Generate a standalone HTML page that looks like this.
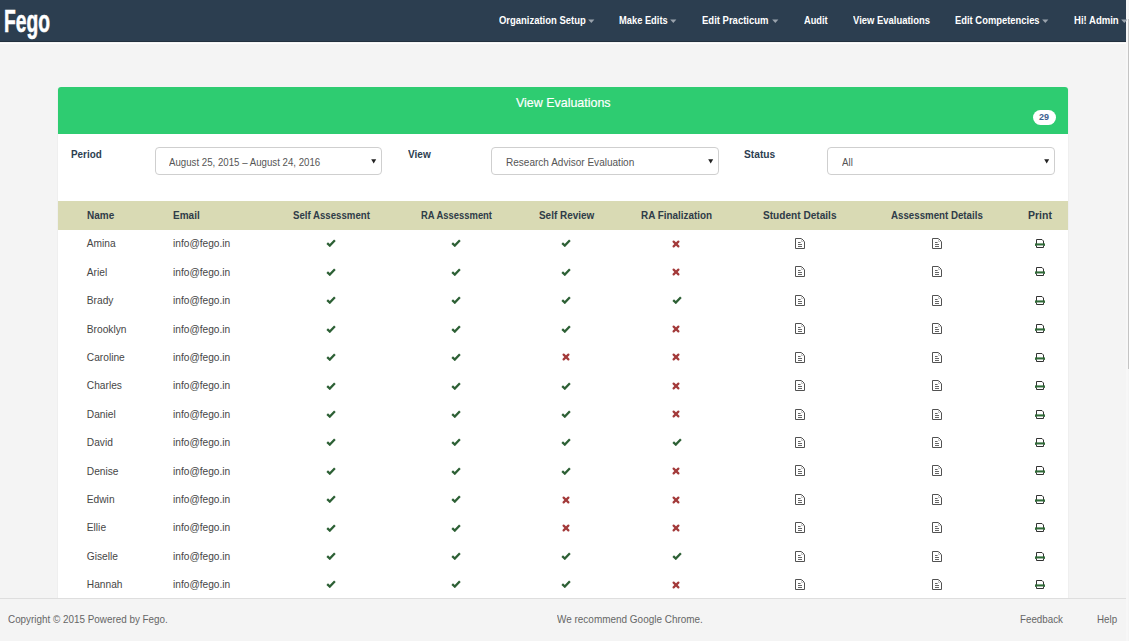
<!DOCTYPE html>
<html><head><meta charset="utf-8"><title>View Evaluations - Fego</title>
<style>
html,body{margin:0;padding:0;}
body{width:1129px;height:641px;overflow:hidden;position:relative;background:#f4f4f4;font-family:"Liberation Sans", sans-serif;}
.t{position:absolute;white-space:nowrap;font-family:"Liberation Sans", sans-serif;transform-origin:0 0;}
#t7{-webkit-text-stroke:0.6px #fff;}
#t8{-webkit-text-stroke:0.2px #fff;}
.ic{position:absolute;display:block;}
.navbar{position:absolute;left:0;top:0;width:1126px;height:42px;background:#2c3e50;border-bottom:0;}
.navline{position:absolute;left:0;top:41px;width:1126px;height:1px;background:#22303e;}
.navglow{position:absolute;left:0;top:43px;width:1126px;height:1px;background:#fdfdfd;}
.panel{position:absolute;left:58px;top:87px;width:1010px;height:520px;background:#fff;border-radius:3px 3px 0 0;box-shadow:-1px 0 0 #efefef,1px 0 0 #efefef;}
.phead{position:absolute;left:58px;top:87px;width:1010px;height:47px;background:#2ecc71;border-radius:3px 3px 0 0;}
.badge{position:absolute;left:1033px;top:110px;width:23px;height:15px;border-radius:8px;background:#fff;}
.sel{position:absolute;top:147px;height:26.3px;width:226px;border:1px solid #cfcfcf;border-radius:4px;background:#fff;box-sizing:content-box;}
.thead{position:absolute;left:58px;top:201px;width:1010px;height:29px;background:#d9dab4;}
.footer{position:absolute;left:0;top:598px;width:1126px;height:43px;background:#f4f4f4;border-top:1px solid #dedede;box-sizing:border-box;}
.sbar1{position:absolute;left:1126px;top:0;width:2px;height:641px;background:#f7f7f7;}
.sbar2{position:absolute;left:1128px;top:19px;width:1px;height:350px;background:#c4c4c4;}
</style></head><body>
<div class="navbar"></div><div class="navline"></div><div class="navglow"></div>
<div class="panel"></div>
<div class="phead"></div>
<div class="badge"></div>
<div class="sel" style="left:155px;width:225px"></div>
<div class="sel" style="left:491px"></div>
<div class="sel" style="left:827px"></div>
<div class="thead"></div>
<svg class="ic" style="left:325.70px;top:239.40px" width="10" height="8" viewBox="0 0 10 8"><path d="M1.2 4.2 L3.8 6.6 L8.9 1.3" fill="none" stroke="#2d6035" stroke-width="2.3" stroke-linecap="butt" stroke-linejoin="miter"/></svg><svg class="ic" style="left:451.40px;top:239.40px" width="10" height="8" viewBox="0 0 10 8"><path d="M1.2 4.2 L3.8 6.6 L8.9 1.3" fill="none" stroke="#2d6035" stroke-width="2.3" stroke-linecap="butt" stroke-linejoin="miter"/></svg><svg class="ic" style="left:561.40px;top:239.40px" width="10" height="8" viewBox="0 0 10 8"><path d="M1.2 4.2 L3.8 6.6 L8.9 1.3" fill="none" stroke="#2d6035" stroke-width="2.3" stroke-linecap="butt" stroke-linejoin="miter"/></svg><svg class="ic" style="left:672.00px;top:239.80px" width="8" height="8" viewBox="0 0 8 8"><path d="M1.6 1.6 L6.4 6.4 M6.4 1.6 L1.6 6.4" fill="none" stroke="#a33a3a" stroke-width="2.2" stroke-linecap="round"/></svg><svg class="ic" style="left:795px;top:238px" width="10" height="11" viewBox="0 0 10 11"><path d="M0.5 0.5 H6.5 L9.5 3.5 V10.5 H0.5 Z" fill="#fff" stroke="#525252" stroke-width="1"/><path d="M3 4.5 H5.6 M3 6.5 H7 M3 8.5 H7" stroke="#666" stroke-width="1"/><path d="M6.5 0.5 V3.5 H9.5" fill="none" stroke="#b0b0b0" stroke-width="0.7"/></svg><svg class="ic" style="left:932px;top:238px" width="10" height="11" viewBox="0 0 10 11"><path d="M0.5 0.5 H6.5 L9.5 3.5 V10.5 H0.5 Z" fill="#fff" stroke="#525252" stroke-width="1"/><path d="M3 4.5 H5.6 M3 6.5 H7 M3 8.5 H7" stroke="#666" stroke-width="1"/><path d="M6.5 0.5 V3.5 H9.5" fill="none" stroke="#b0b0b0" stroke-width="0.7"/></svg><svg class="ic" style="left:1035px;top:239px" width="10" height="9" viewBox="0 0 10 9"><path d="M1.5 5 V0.5 H7 L8.5 2 V5" fill="#fff" stroke="#333" stroke-width="1"/><rect x="0" y="4.4" width="10" height="2.5" fill="#2f6b37"/><path d="M1.5 6.5 V8.5 H8.5 V6.5" fill="#fff" stroke="#333" stroke-width="1"/></svg><svg class="ic" style="left:325.70px;top:267.82px" width="10" height="8" viewBox="0 0 10 8"><path d="M1.2 4.2 L3.8 6.6 L8.9 1.3" fill="none" stroke="#2d6035" stroke-width="2.3" stroke-linecap="butt" stroke-linejoin="miter"/></svg><svg class="ic" style="left:451.40px;top:267.82px" width="10" height="8" viewBox="0 0 10 8"><path d="M1.2 4.2 L3.8 6.6 L8.9 1.3" fill="none" stroke="#2d6035" stroke-width="2.3" stroke-linecap="butt" stroke-linejoin="miter"/></svg><svg class="ic" style="left:561.40px;top:267.82px" width="10" height="8" viewBox="0 0 10 8"><path d="M1.2 4.2 L3.8 6.6 L8.9 1.3" fill="none" stroke="#2d6035" stroke-width="2.3" stroke-linecap="butt" stroke-linejoin="miter"/></svg><svg class="ic" style="left:672.00px;top:268.22px" width="8" height="8" viewBox="0 0 8 8"><path d="M1.6 1.6 L6.4 6.4 M6.4 1.6 L1.6 6.4" fill="none" stroke="#a33a3a" stroke-width="2.2" stroke-linecap="round"/></svg><svg class="ic" style="left:795px;top:266px" width="10" height="11" viewBox="0 0 10 11"><path d="M0.5 0.5 H6.5 L9.5 3.5 V10.5 H0.5 Z" fill="#fff" stroke="#525252" stroke-width="1"/><path d="M3 4.5 H5.6 M3 6.5 H7 M3 8.5 H7" stroke="#666" stroke-width="1"/><path d="M6.5 0.5 V3.5 H9.5" fill="none" stroke="#b0b0b0" stroke-width="0.7"/></svg><svg class="ic" style="left:932px;top:266px" width="10" height="11" viewBox="0 0 10 11"><path d="M0.5 0.5 H6.5 L9.5 3.5 V10.5 H0.5 Z" fill="#fff" stroke="#525252" stroke-width="1"/><path d="M3 4.5 H5.6 M3 6.5 H7 M3 8.5 H7" stroke="#666" stroke-width="1"/><path d="M6.5 0.5 V3.5 H9.5" fill="none" stroke="#b0b0b0" stroke-width="0.7"/></svg><svg class="ic" style="left:1035px;top:267px" width="10" height="9" viewBox="0 0 10 9"><path d="M1.5 5 V0.5 H7 L8.5 2 V5" fill="#fff" stroke="#333" stroke-width="1"/><rect x="0" y="4.4" width="10" height="2.5" fill="#2f6b37"/><path d="M1.5 6.5 V8.5 H8.5 V6.5" fill="#fff" stroke="#333" stroke-width="1"/></svg><svg class="ic" style="left:325.70px;top:296.24px" width="10" height="8" viewBox="0 0 10 8"><path d="M1.2 4.2 L3.8 6.6 L8.9 1.3" fill="none" stroke="#2d6035" stroke-width="2.3" stroke-linecap="butt" stroke-linejoin="miter"/></svg><svg class="ic" style="left:451.40px;top:296.24px" width="10" height="8" viewBox="0 0 10 8"><path d="M1.2 4.2 L3.8 6.6 L8.9 1.3" fill="none" stroke="#2d6035" stroke-width="2.3" stroke-linecap="butt" stroke-linejoin="miter"/></svg><svg class="ic" style="left:561.40px;top:296.24px" width="10" height="8" viewBox="0 0 10 8"><path d="M1.2 4.2 L3.8 6.6 L8.9 1.3" fill="none" stroke="#2d6035" stroke-width="2.3" stroke-linecap="butt" stroke-linejoin="miter"/></svg><svg class="ic" style="left:671.50px;top:296.24px" width="10" height="8" viewBox="0 0 10 8"><path d="M1.2 4.2 L3.8 6.6 L8.9 1.3" fill="none" stroke="#2d6035" stroke-width="2.3" stroke-linecap="butt" stroke-linejoin="miter"/></svg><svg class="ic" style="left:795px;top:295px" width="10" height="11" viewBox="0 0 10 11"><path d="M0.5 0.5 H6.5 L9.5 3.5 V10.5 H0.5 Z" fill="#fff" stroke="#525252" stroke-width="1"/><path d="M3 4.5 H5.6 M3 6.5 H7 M3 8.5 H7" stroke="#666" stroke-width="1"/><path d="M6.5 0.5 V3.5 H9.5" fill="none" stroke="#b0b0b0" stroke-width="0.7"/></svg><svg class="ic" style="left:932px;top:295px" width="10" height="11" viewBox="0 0 10 11"><path d="M0.5 0.5 H6.5 L9.5 3.5 V10.5 H0.5 Z" fill="#fff" stroke="#525252" stroke-width="1"/><path d="M3 4.5 H5.6 M3 6.5 H7 M3 8.5 H7" stroke="#666" stroke-width="1"/><path d="M6.5 0.5 V3.5 H9.5" fill="none" stroke="#b0b0b0" stroke-width="0.7"/></svg><svg class="ic" style="left:1035px;top:296px" width="10" height="9" viewBox="0 0 10 9"><path d="M1.5 5 V0.5 H7 L8.5 2 V5" fill="#fff" stroke="#333" stroke-width="1"/><rect x="0" y="4.4" width="10" height="2.5" fill="#2f6b37"/><path d="M1.5 6.5 V8.5 H8.5 V6.5" fill="#fff" stroke="#333" stroke-width="1"/></svg><svg class="ic" style="left:325.70px;top:324.66px" width="10" height="8" viewBox="0 0 10 8"><path d="M1.2 4.2 L3.8 6.6 L8.9 1.3" fill="none" stroke="#2d6035" stroke-width="2.3" stroke-linecap="butt" stroke-linejoin="miter"/></svg><svg class="ic" style="left:451.40px;top:324.66px" width="10" height="8" viewBox="0 0 10 8"><path d="M1.2 4.2 L3.8 6.6 L8.9 1.3" fill="none" stroke="#2d6035" stroke-width="2.3" stroke-linecap="butt" stroke-linejoin="miter"/></svg><svg class="ic" style="left:561.40px;top:324.66px" width="10" height="8" viewBox="0 0 10 8"><path d="M1.2 4.2 L3.8 6.6 L8.9 1.3" fill="none" stroke="#2d6035" stroke-width="2.3" stroke-linecap="butt" stroke-linejoin="miter"/></svg><svg class="ic" style="left:672.00px;top:325.06px" width="8" height="8" viewBox="0 0 8 8"><path d="M1.6 1.6 L6.4 6.4 M6.4 1.6 L1.6 6.4" fill="none" stroke="#a33a3a" stroke-width="2.2" stroke-linecap="round"/></svg><svg class="ic" style="left:795px;top:323px" width="10" height="11" viewBox="0 0 10 11"><path d="M0.5 0.5 H6.5 L9.5 3.5 V10.5 H0.5 Z" fill="#fff" stroke="#525252" stroke-width="1"/><path d="M3 4.5 H5.6 M3 6.5 H7 M3 8.5 H7" stroke="#666" stroke-width="1"/><path d="M6.5 0.5 V3.5 H9.5" fill="none" stroke="#b0b0b0" stroke-width="0.7"/></svg><svg class="ic" style="left:932px;top:323px" width="10" height="11" viewBox="0 0 10 11"><path d="M0.5 0.5 H6.5 L9.5 3.5 V10.5 H0.5 Z" fill="#fff" stroke="#525252" stroke-width="1"/><path d="M3 4.5 H5.6 M3 6.5 H7 M3 8.5 H7" stroke="#666" stroke-width="1"/><path d="M6.5 0.5 V3.5 H9.5" fill="none" stroke="#b0b0b0" stroke-width="0.7"/></svg><svg class="ic" style="left:1035px;top:324px" width="10" height="9" viewBox="0 0 10 9"><path d="M1.5 5 V0.5 H7 L8.5 2 V5" fill="#fff" stroke="#333" stroke-width="1"/><rect x="0" y="4.4" width="10" height="2.5" fill="#2f6b37"/><path d="M1.5 6.5 V8.5 H8.5 V6.5" fill="#fff" stroke="#333" stroke-width="1"/></svg><svg class="ic" style="left:325.70px;top:353.08px" width="10" height="8" viewBox="0 0 10 8"><path d="M1.2 4.2 L3.8 6.6 L8.9 1.3" fill="none" stroke="#2d6035" stroke-width="2.3" stroke-linecap="butt" stroke-linejoin="miter"/></svg><svg class="ic" style="left:451.40px;top:353.08px" width="10" height="8" viewBox="0 0 10 8"><path d="M1.2 4.2 L3.8 6.6 L8.9 1.3" fill="none" stroke="#2d6035" stroke-width="2.3" stroke-linecap="butt" stroke-linejoin="miter"/></svg><svg class="ic" style="left:561.90px;top:353.48px" width="8" height="8" viewBox="0 0 8 8"><path d="M1.6 1.6 L6.4 6.4 M6.4 1.6 L1.6 6.4" fill="none" stroke="#a33a3a" stroke-width="2.2" stroke-linecap="round"/></svg><svg class="ic" style="left:672.00px;top:353.48px" width="8" height="8" viewBox="0 0 8 8"><path d="M1.6 1.6 L6.4 6.4 M6.4 1.6 L1.6 6.4" fill="none" stroke="#a33a3a" stroke-width="2.2" stroke-linecap="round"/></svg><svg class="ic" style="left:795px;top:352px" width="10" height="11" viewBox="0 0 10 11"><path d="M0.5 0.5 H6.5 L9.5 3.5 V10.5 H0.5 Z" fill="#fff" stroke="#525252" stroke-width="1"/><path d="M3 4.5 H5.6 M3 6.5 H7 M3 8.5 H7" stroke="#666" stroke-width="1"/><path d="M6.5 0.5 V3.5 H9.5" fill="none" stroke="#b0b0b0" stroke-width="0.7"/></svg><svg class="ic" style="left:932px;top:352px" width="10" height="11" viewBox="0 0 10 11"><path d="M0.5 0.5 H6.5 L9.5 3.5 V10.5 H0.5 Z" fill="#fff" stroke="#525252" stroke-width="1"/><path d="M3 4.5 H5.6 M3 6.5 H7 M3 8.5 H7" stroke="#666" stroke-width="1"/><path d="M6.5 0.5 V3.5 H9.5" fill="none" stroke="#b0b0b0" stroke-width="0.7"/></svg><svg class="ic" style="left:1035px;top:353px" width="10" height="9" viewBox="0 0 10 9"><path d="M1.5 5 V0.5 H7 L8.5 2 V5" fill="#fff" stroke="#333" stroke-width="1"/><rect x="0" y="4.4" width="10" height="2.5" fill="#2f6b37"/><path d="M1.5 6.5 V8.5 H8.5 V6.5" fill="#fff" stroke="#333" stroke-width="1"/></svg><svg class="ic" style="left:325.70px;top:381.50px" width="10" height="8" viewBox="0 0 10 8"><path d="M1.2 4.2 L3.8 6.6 L8.9 1.3" fill="none" stroke="#2d6035" stroke-width="2.3" stroke-linecap="butt" stroke-linejoin="miter"/></svg><svg class="ic" style="left:451.40px;top:381.50px" width="10" height="8" viewBox="0 0 10 8"><path d="M1.2 4.2 L3.8 6.6 L8.9 1.3" fill="none" stroke="#2d6035" stroke-width="2.3" stroke-linecap="butt" stroke-linejoin="miter"/></svg><svg class="ic" style="left:561.40px;top:381.50px" width="10" height="8" viewBox="0 0 10 8"><path d="M1.2 4.2 L3.8 6.6 L8.9 1.3" fill="none" stroke="#2d6035" stroke-width="2.3" stroke-linecap="butt" stroke-linejoin="miter"/></svg><svg class="ic" style="left:672.00px;top:381.90px" width="8" height="8" viewBox="0 0 8 8"><path d="M1.6 1.6 L6.4 6.4 M6.4 1.6 L1.6 6.4" fill="none" stroke="#a33a3a" stroke-width="2.2" stroke-linecap="round"/></svg><svg class="ic" style="left:795px;top:380px" width="10" height="11" viewBox="0 0 10 11"><path d="M0.5 0.5 H6.5 L9.5 3.5 V10.5 H0.5 Z" fill="#fff" stroke="#525252" stroke-width="1"/><path d="M3 4.5 H5.6 M3 6.5 H7 M3 8.5 H7" stroke="#666" stroke-width="1"/><path d="M6.5 0.5 V3.5 H9.5" fill="none" stroke="#b0b0b0" stroke-width="0.7"/></svg><svg class="ic" style="left:932px;top:380px" width="10" height="11" viewBox="0 0 10 11"><path d="M0.5 0.5 H6.5 L9.5 3.5 V10.5 H0.5 Z" fill="#fff" stroke="#525252" stroke-width="1"/><path d="M3 4.5 H5.6 M3 6.5 H7 M3 8.5 H7" stroke="#666" stroke-width="1"/><path d="M6.5 0.5 V3.5 H9.5" fill="none" stroke="#b0b0b0" stroke-width="0.7"/></svg><svg class="ic" style="left:1035px;top:381px" width="10" height="9" viewBox="0 0 10 9"><path d="M1.5 5 V0.5 H7 L8.5 2 V5" fill="#fff" stroke="#333" stroke-width="1"/><rect x="0" y="4.4" width="10" height="2.5" fill="#2f6b37"/><path d="M1.5 6.5 V8.5 H8.5 V6.5" fill="#fff" stroke="#333" stroke-width="1"/></svg><svg class="ic" style="left:325.70px;top:409.92px" width="10" height="8" viewBox="0 0 10 8"><path d="M1.2 4.2 L3.8 6.6 L8.9 1.3" fill="none" stroke="#2d6035" stroke-width="2.3" stroke-linecap="butt" stroke-linejoin="miter"/></svg><svg class="ic" style="left:451.40px;top:409.92px" width="10" height="8" viewBox="0 0 10 8"><path d="M1.2 4.2 L3.8 6.6 L8.9 1.3" fill="none" stroke="#2d6035" stroke-width="2.3" stroke-linecap="butt" stroke-linejoin="miter"/></svg><svg class="ic" style="left:561.40px;top:409.92px" width="10" height="8" viewBox="0 0 10 8"><path d="M1.2 4.2 L3.8 6.6 L8.9 1.3" fill="none" stroke="#2d6035" stroke-width="2.3" stroke-linecap="butt" stroke-linejoin="miter"/></svg><svg class="ic" style="left:672.00px;top:410.32px" width="8" height="8" viewBox="0 0 8 8"><path d="M1.6 1.6 L6.4 6.4 M6.4 1.6 L1.6 6.4" fill="none" stroke="#a33a3a" stroke-width="2.2" stroke-linecap="round"/></svg><svg class="ic" style="left:795px;top:409px" width="10" height="11" viewBox="0 0 10 11"><path d="M0.5 0.5 H6.5 L9.5 3.5 V10.5 H0.5 Z" fill="#fff" stroke="#525252" stroke-width="1"/><path d="M3 4.5 H5.6 M3 6.5 H7 M3 8.5 H7" stroke="#666" stroke-width="1"/><path d="M6.5 0.5 V3.5 H9.5" fill="none" stroke="#b0b0b0" stroke-width="0.7"/></svg><svg class="ic" style="left:932px;top:409px" width="10" height="11" viewBox="0 0 10 11"><path d="M0.5 0.5 H6.5 L9.5 3.5 V10.5 H0.5 Z" fill="#fff" stroke="#525252" stroke-width="1"/><path d="M3 4.5 H5.6 M3 6.5 H7 M3 8.5 H7" stroke="#666" stroke-width="1"/><path d="M6.5 0.5 V3.5 H9.5" fill="none" stroke="#b0b0b0" stroke-width="0.7"/></svg><svg class="ic" style="left:1035px;top:410px" width="10" height="9" viewBox="0 0 10 9"><path d="M1.5 5 V0.5 H7 L8.5 2 V5" fill="#fff" stroke="#333" stroke-width="1"/><rect x="0" y="4.4" width="10" height="2.5" fill="#2f6b37"/><path d="M1.5 6.5 V8.5 H8.5 V6.5" fill="#fff" stroke="#333" stroke-width="1"/></svg><svg class="ic" style="left:325.70px;top:438.34px" width="10" height="8" viewBox="0 0 10 8"><path d="M1.2 4.2 L3.8 6.6 L8.9 1.3" fill="none" stroke="#2d6035" stroke-width="2.3" stroke-linecap="butt" stroke-linejoin="miter"/></svg><svg class="ic" style="left:451.40px;top:438.34px" width="10" height="8" viewBox="0 0 10 8"><path d="M1.2 4.2 L3.8 6.6 L8.9 1.3" fill="none" stroke="#2d6035" stroke-width="2.3" stroke-linecap="butt" stroke-linejoin="miter"/></svg><svg class="ic" style="left:561.40px;top:438.34px" width="10" height="8" viewBox="0 0 10 8"><path d="M1.2 4.2 L3.8 6.6 L8.9 1.3" fill="none" stroke="#2d6035" stroke-width="2.3" stroke-linecap="butt" stroke-linejoin="miter"/></svg><svg class="ic" style="left:671.50px;top:438.34px" width="10" height="8" viewBox="0 0 10 8"><path d="M1.2 4.2 L3.8 6.6 L8.9 1.3" fill="none" stroke="#2d6035" stroke-width="2.3" stroke-linecap="butt" stroke-linejoin="miter"/></svg><svg class="ic" style="left:795px;top:437px" width="10" height="11" viewBox="0 0 10 11"><path d="M0.5 0.5 H6.5 L9.5 3.5 V10.5 H0.5 Z" fill="#fff" stroke="#525252" stroke-width="1"/><path d="M3 4.5 H5.6 M3 6.5 H7 M3 8.5 H7" stroke="#666" stroke-width="1"/><path d="M6.5 0.5 V3.5 H9.5" fill="none" stroke="#b0b0b0" stroke-width="0.7"/></svg><svg class="ic" style="left:932px;top:437px" width="10" height="11" viewBox="0 0 10 11"><path d="M0.5 0.5 H6.5 L9.5 3.5 V10.5 H0.5 Z" fill="#fff" stroke="#525252" stroke-width="1"/><path d="M3 4.5 H5.6 M3 6.5 H7 M3 8.5 H7" stroke="#666" stroke-width="1"/><path d="M6.5 0.5 V3.5 H9.5" fill="none" stroke="#b0b0b0" stroke-width="0.7"/></svg><svg class="ic" style="left:1035px;top:438px" width="10" height="9" viewBox="0 0 10 9"><path d="M1.5 5 V0.5 H7 L8.5 2 V5" fill="#fff" stroke="#333" stroke-width="1"/><rect x="0" y="4.4" width="10" height="2.5" fill="#2f6b37"/><path d="M1.5 6.5 V8.5 H8.5 V6.5" fill="#fff" stroke="#333" stroke-width="1"/></svg><svg class="ic" style="left:325.70px;top:466.76px" width="10" height="8" viewBox="0 0 10 8"><path d="M1.2 4.2 L3.8 6.6 L8.9 1.3" fill="none" stroke="#2d6035" stroke-width="2.3" stroke-linecap="butt" stroke-linejoin="miter"/></svg><svg class="ic" style="left:451.40px;top:466.76px" width="10" height="8" viewBox="0 0 10 8"><path d="M1.2 4.2 L3.8 6.6 L8.9 1.3" fill="none" stroke="#2d6035" stroke-width="2.3" stroke-linecap="butt" stroke-linejoin="miter"/></svg><svg class="ic" style="left:561.40px;top:466.76px" width="10" height="8" viewBox="0 0 10 8"><path d="M1.2 4.2 L3.8 6.6 L8.9 1.3" fill="none" stroke="#2d6035" stroke-width="2.3" stroke-linecap="butt" stroke-linejoin="miter"/></svg><svg class="ic" style="left:672.00px;top:467.16px" width="8" height="8" viewBox="0 0 8 8"><path d="M1.6 1.6 L6.4 6.4 M6.4 1.6 L1.6 6.4" fill="none" stroke="#a33a3a" stroke-width="2.2" stroke-linecap="round"/></svg><svg class="ic" style="left:795px;top:465px" width="10" height="11" viewBox="0 0 10 11"><path d="M0.5 0.5 H6.5 L9.5 3.5 V10.5 H0.5 Z" fill="#fff" stroke="#525252" stroke-width="1"/><path d="M3 4.5 H5.6 M3 6.5 H7 M3 8.5 H7" stroke="#666" stroke-width="1"/><path d="M6.5 0.5 V3.5 H9.5" fill="none" stroke="#b0b0b0" stroke-width="0.7"/></svg><svg class="ic" style="left:932px;top:465px" width="10" height="11" viewBox="0 0 10 11"><path d="M0.5 0.5 H6.5 L9.5 3.5 V10.5 H0.5 Z" fill="#fff" stroke="#525252" stroke-width="1"/><path d="M3 4.5 H5.6 M3 6.5 H7 M3 8.5 H7" stroke="#666" stroke-width="1"/><path d="M6.5 0.5 V3.5 H9.5" fill="none" stroke="#b0b0b0" stroke-width="0.7"/></svg><svg class="ic" style="left:1035px;top:466px" width="10" height="9" viewBox="0 0 10 9"><path d="M1.5 5 V0.5 H7 L8.5 2 V5" fill="#fff" stroke="#333" stroke-width="1"/><rect x="0" y="4.4" width="10" height="2.5" fill="#2f6b37"/><path d="M1.5 6.5 V8.5 H8.5 V6.5" fill="#fff" stroke="#333" stroke-width="1"/></svg><svg class="ic" style="left:325.70px;top:495.18px" width="10" height="8" viewBox="0 0 10 8"><path d="M1.2 4.2 L3.8 6.6 L8.9 1.3" fill="none" stroke="#2d6035" stroke-width="2.3" stroke-linecap="butt" stroke-linejoin="miter"/></svg><svg class="ic" style="left:451.40px;top:495.18px" width="10" height="8" viewBox="0 0 10 8"><path d="M1.2 4.2 L3.8 6.6 L8.9 1.3" fill="none" stroke="#2d6035" stroke-width="2.3" stroke-linecap="butt" stroke-linejoin="miter"/></svg><svg class="ic" style="left:561.90px;top:495.58px" width="8" height="8" viewBox="0 0 8 8"><path d="M1.6 1.6 L6.4 6.4 M6.4 1.6 L1.6 6.4" fill="none" stroke="#a33a3a" stroke-width="2.2" stroke-linecap="round"/></svg><svg class="ic" style="left:672.00px;top:495.58px" width="8" height="8" viewBox="0 0 8 8"><path d="M1.6 1.6 L6.4 6.4 M6.4 1.6 L1.6 6.4" fill="none" stroke="#a33a3a" stroke-width="2.2" stroke-linecap="round"/></svg><svg class="ic" style="left:795px;top:494px" width="10" height="11" viewBox="0 0 10 11"><path d="M0.5 0.5 H6.5 L9.5 3.5 V10.5 H0.5 Z" fill="#fff" stroke="#525252" stroke-width="1"/><path d="M3 4.5 H5.6 M3 6.5 H7 M3 8.5 H7" stroke="#666" stroke-width="1"/><path d="M6.5 0.5 V3.5 H9.5" fill="none" stroke="#b0b0b0" stroke-width="0.7"/></svg><svg class="ic" style="left:932px;top:494px" width="10" height="11" viewBox="0 0 10 11"><path d="M0.5 0.5 H6.5 L9.5 3.5 V10.5 H0.5 Z" fill="#fff" stroke="#525252" stroke-width="1"/><path d="M3 4.5 H5.6 M3 6.5 H7 M3 8.5 H7" stroke="#666" stroke-width="1"/><path d="M6.5 0.5 V3.5 H9.5" fill="none" stroke="#b0b0b0" stroke-width="0.7"/></svg><svg class="ic" style="left:1035px;top:495px" width="10" height="9" viewBox="0 0 10 9"><path d="M1.5 5 V0.5 H7 L8.5 2 V5" fill="#fff" stroke="#333" stroke-width="1"/><rect x="0" y="4.4" width="10" height="2.5" fill="#2f6b37"/><path d="M1.5 6.5 V8.5 H8.5 V6.5" fill="#fff" stroke="#333" stroke-width="1"/></svg><svg class="ic" style="left:325.70px;top:523.60px" width="10" height="8" viewBox="0 0 10 8"><path d="M1.2 4.2 L3.8 6.6 L8.9 1.3" fill="none" stroke="#2d6035" stroke-width="2.3" stroke-linecap="butt" stroke-linejoin="miter"/></svg><svg class="ic" style="left:451.40px;top:523.60px" width="10" height="8" viewBox="0 0 10 8"><path d="M1.2 4.2 L3.8 6.6 L8.9 1.3" fill="none" stroke="#2d6035" stroke-width="2.3" stroke-linecap="butt" stroke-linejoin="miter"/></svg><svg class="ic" style="left:561.90px;top:524.00px" width="8" height="8" viewBox="0 0 8 8"><path d="M1.6 1.6 L6.4 6.4 M6.4 1.6 L1.6 6.4" fill="none" stroke="#a33a3a" stroke-width="2.2" stroke-linecap="round"/></svg><svg class="ic" style="left:672.00px;top:524.00px" width="8" height="8" viewBox="0 0 8 8"><path d="M1.6 1.6 L6.4 6.4 M6.4 1.6 L1.6 6.4" fill="none" stroke="#a33a3a" stroke-width="2.2" stroke-linecap="round"/></svg><svg class="ic" style="left:795px;top:522px" width="10" height="11" viewBox="0 0 10 11"><path d="M0.5 0.5 H6.5 L9.5 3.5 V10.5 H0.5 Z" fill="#fff" stroke="#525252" stroke-width="1"/><path d="M3 4.5 H5.6 M3 6.5 H7 M3 8.5 H7" stroke="#666" stroke-width="1"/><path d="M6.5 0.5 V3.5 H9.5" fill="none" stroke="#b0b0b0" stroke-width="0.7"/></svg><svg class="ic" style="left:932px;top:522px" width="10" height="11" viewBox="0 0 10 11"><path d="M0.5 0.5 H6.5 L9.5 3.5 V10.5 H0.5 Z" fill="#fff" stroke="#525252" stroke-width="1"/><path d="M3 4.5 H5.6 M3 6.5 H7 M3 8.5 H7" stroke="#666" stroke-width="1"/><path d="M6.5 0.5 V3.5 H9.5" fill="none" stroke="#b0b0b0" stroke-width="0.7"/></svg><svg class="ic" style="left:1035px;top:523px" width="10" height="9" viewBox="0 0 10 9"><path d="M1.5 5 V0.5 H7 L8.5 2 V5" fill="#fff" stroke="#333" stroke-width="1"/><rect x="0" y="4.4" width="10" height="2.5" fill="#2f6b37"/><path d="M1.5 6.5 V8.5 H8.5 V6.5" fill="#fff" stroke="#333" stroke-width="1"/></svg><svg class="ic" style="left:325.70px;top:552.02px" width="10" height="8" viewBox="0 0 10 8"><path d="M1.2 4.2 L3.8 6.6 L8.9 1.3" fill="none" stroke="#2d6035" stroke-width="2.3" stroke-linecap="butt" stroke-linejoin="miter"/></svg><svg class="ic" style="left:451.40px;top:552.02px" width="10" height="8" viewBox="0 0 10 8"><path d="M1.2 4.2 L3.8 6.6 L8.9 1.3" fill="none" stroke="#2d6035" stroke-width="2.3" stroke-linecap="butt" stroke-linejoin="miter"/></svg><svg class="ic" style="left:561.40px;top:552.02px" width="10" height="8" viewBox="0 0 10 8"><path d="M1.2 4.2 L3.8 6.6 L8.9 1.3" fill="none" stroke="#2d6035" stroke-width="2.3" stroke-linecap="butt" stroke-linejoin="miter"/></svg><svg class="ic" style="left:671.50px;top:552.02px" width="10" height="8" viewBox="0 0 10 8"><path d="M1.2 4.2 L3.8 6.6 L8.9 1.3" fill="none" stroke="#2d6035" stroke-width="2.3" stroke-linecap="butt" stroke-linejoin="miter"/></svg><svg class="ic" style="left:795px;top:551px" width="10" height="11" viewBox="0 0 10 11"><path d="M0.5 0.5 H6.5 L9.5 3.5 V10.5 H0.5 Z" fill="#fff" stroke="#525252" stroke-width="1"/><path d="M3 4.5 H5.6 M3 6.5 H7 M3 8.5 H7" stroke="#666" stroke-width="1"/><path d="M6.5 0.5 V3.5 H9.5" fill="none" stroke="#b0b0b0" stroke-width="0.7"/></svg><svg class="ic" style="left:932px;top:551px" width="10" height="11" viewBox="0 0 10 11"><path d="M0.5 0.5 H6.5 L9.5 3.5 V10.5 H0.5 Z" fill="#fff" stroke="#525252" stroke-width="1"/><path d="M3 4.5 H5.6 M3 6.5 H7 M3 8.5 H7" stroke="#666" stroke-width="1"/><path d="M6.5 0.5 V3.5 H9.5" fill="none" stroke="#b0b0b0" stroke-width="0.7"/></svg><svg class="ic" style="left:1035px;top:552px" width="10" height="9" viewBox="0 0 10 9"><path d="M1.5 5 V0.5 H7 L8.5 2 V5" fill="#fff" stroke="#333" stroke-width="1"/><rect x="0" y="4.4" width="10" height="2.5" fill="#2f6b37"/><path d="M1.5 6.5 V8.5 H8.5 V6.5" fill="#fff" stroke="#333" stroke-width="1"/></svg><svg class="ic" style="left:325.70px;top:580.44px" width="10" height="8" viewBox="0 0 10 8"><path d="M1.2 4.2 L3.8 6.6 L8.9 1.3" fill="none" stroke="#2d6035" stroke-width="2.3" stroke-linecap="butt" stroke-linejoin="miter"/></svg><svg class="ic" style="left:451.40px;top:580.44px" width="10" height="8" viewBox="0 0 10 8"><path d="M1.2 4.2 L3.8 6.6 L8.9 1.3" fill="none" stroke="#2d6035" stroke-width="2.3" stroke-linecap="butt" stroke-linejoin="miter"/></svg><svg class="ic" style="left:561.40px;top:580.44px" width="10" height="8" viewBox="0 0 10 8"><path d="M1.2 4.2 L3.8 6.6 L8.9 1.3" fill="none" stroke="#2d6035" stroke-width="2.3" stroke-linecap="butt" stroke-linejoin="miter"/></svg><svg class="ic" style="left:672.00px;top:580.84px" width="8" height="8" viewBox="0 0 8 8"><path d="M1.6 1.6 L6.4 6.4 M6.4 1.6 L1.6 6.4" fill="none" stroke="#a33a3a" stroke-width="2.2" stroke-linecap="round"/></svg><svg class="ic" style="left:795px;top:579px" width="10" height="11" viewBox="0 0 10 11"><path d="M0.5 0.5 H6.5 L9.5 3.5 V10.5 H0.5 Z" fill="#fff" stroke="#525252" stroke-width="1"/><path d="M3 4.5 H5.6 M3 6.5 H7 M3 8.5 H7" stroke="#666" stroke-width="1"/><path d="M6.5 0.5 V3.5 H9.5" fill="none" stroke="#b0b0b0" stroke-width="0.7"/></svg><svg class="ic" style="left:932px;top:579px" width="10" height="11" viewBox="0 0 10 11"><path d="M0.5 0.5 H6.5 L9.5 3.5 V10.5 H0.5 Z" fill="#fff" stroke="#525252" stroke-width="1"/><path d="M3 4.5 H5.6 M3 6.5 H7 M3 8.5 H7" stroke="#666" stroke-width="1"/><path d="M6.5 0.5 V3.5 H9.5" fill="none" stroke="#b0b0b0" stroke-width="0.7"/></svg><svg class="ic" style="left:1035px;top:580px" width="10" height="9" viewBox="0 0 10 9"><path d="M1.5 5 V0.5 H7 L8.5 2 V5" fill="#fff" stroke="#333" stroke-width="1"/><rect x="0" y="4.4" width="10" height="2.5" fill="#2f6b37"/><path d="M1.5 6.5 V8.5 H8.5 V6.5" fill="#fff" stroke="#333" stroke-width="1"/></svg>
<div class="footer"></div>
<div class="sbar1"></div><div class="sbar2"></div>
<svg class="ic" style="left:587.80px;top:18.5px" width="7" height="5" viewBox="0 0 7 5"><path d="M0.2 0.6 H6.4 L3.3 3.9 Z" fill="#9aa3ad"/></svg><svg class="ic" style="left:669.80px;top:18.5px" width="7" height="5" viewBox="0 0 7 5"><path d="M0.2 0.6 H6.4 L3.3 3.9 Z" fill="#9aa3ad"/></svg><svg class="ic" style="left:772.20px;top:18.5px" width="7" height="5" viewBox="0 0 7 5"><path d="M0.2 0.6 H6.4 L3.3 3.9 Z" fill="#9aa3ad"/></svg><svg class="ic" style="left:1042.20px;top:18.5px" width="7" height="5" viewBox="0 0 7 5"><path d="M0.2 0.6 H6.4 L3.3 3.9 Z" fill="#9aa3ad"/></svg><svg class="ic" style="left:1120.60px;top:18.5px" width="7" height="5" viewBox="0 0 7 5"><path d="M0.2 0.6 H6.4 L3.3 3.9 Z" fill="#9aa3ad"/></svg><svg class="ic" style="left:371.40px;top:158.6px" width="6" height="5" viewBox="0 0 6 5"><path d="M0.2 0.3 H5.2 L2.7 4.6 Z" fill="#222"/></svg><svg class="ic" style="left:708.00px;top:158.6px" width="6" height="5" viewBox="0 0 6 5"><path d="M0.2 0.3 H5.2 L2.7 4.6 Z" fill="#222"/></svg><svg class="ic" style="left:1044.00px;top:158.6px" width="6" height="5" viewBox="0 0 6 5"><path d="M0.2 0.3 H5.2 L2.7 4.6 Z" fill="#222"/></svg>
<span class="t" id="t0" style="left:499.00px;top:14.82px;font-size:11.2px;line-height:11.2px;font-weight:bold;color:#ffffff;transform:scaleX(0.8453);">Organization Setup</span><span class="t" id="t1" style="left:619.30px;top:14.82px;font-size:11.2px;line-height:11.2px;font-weight:bold;color:#ffffff;transform:scaleX(0.8331);">Make Edits</span><span class="t" id="t2" style="left:701.50px;top:14.82px;font-size:11.2px;line-height:11.2px;font-weight:bold;color:#ffffff;transform:scaleX(0.8488);">Edit Practicum</span><span class="t" id="t3" style="left:804.00px;top:14.82px;font-size:11.2px;line-height:11.2px;font-weight:bold;color:#ffffff;transform:scaleX(0.8289);">Audit</span><span class="t" id="t4" style="left:852.80px;top:14.82px;font-size:11.2px;line-height:11.2px;font-weight:bold;color:#ffffff;transform:scaleX(0.8443);">View Evaluations</span><span class="t" id="t5" style="left:955.40px;top:14.82px;font-size:11.2px;line-height:11.2px;font-weight:bold;color:#ffffff;transform:scaleX(0.8400);">Edit Competencies</span><span class="t" id="t6" style="left:1073.60px;top:14.82px;font-size:11.2px;line-height:11.2px;font-weight:bold;color:#ffffff;transform:scaleX(0.8527);">Hi! Admin</span><span class="t" id="t7" style="left:4.20px;top:5.11px;font-size:32px;line-height:32px;font-weight:bold;color:#ffffff;transform:scaleX(0.6018);">Fego</span><span class="t" id="t8" style="left:515.60px;top:95.82px;font-size:13.2px;line-height:13.2px;font-weight:normal;color:#ffffff;transform:scaleX(0.9442);">View Evaluations</span><span class="t" id="t9" style="left:1039.00px;top:113.38px;font-size:9px;line-height:9px;font-weight:bold;color:#3d5f8f;">29</span><span class="t" id="t10" style="left:71.20px;top:148.89px;font-size:11px;line-height:11px;font-weight:bold;color:#2c3e50;transform:scaleX(0.8968);">Period</span><span class="t" id="t11" style="left:407.50px;top:148.89px;font-size:11px;line-height:11px;font-weight:bold;color:#2c3e50;transform:scaleX(0.9126);">View</span><span class="t" id="t12" style="left:743.60px;top:148.89px;font-size:11px;line-height:11px;font-weight:bold;color:#2c3e50;transform:scaleX(0.9279);">Status</span><span class="t" id="t13" style="left:168.80px;top:157.68px;font-size:10.3px;line-height:10.3px;font-weight:normal;color:#555555;transform:scaleX(0.9398);">August 25, 2015 – August 24, 2016</span><span class="t" id="t14" style="left:505.50px;top:157.68px;font-size:10.3px;line-height:10.3px;font-weight:normal;color:#555555;transform:scaleX(0.9745);">Research Advisor Evaluation</span><span class="t" id="t15" style="left:842.10px;top:157.68px;font-size:10.3px;line-height:10.3px;font-weight:normal;color:#555555;transform:scaleX(0.9430);">All</span><span class="t" id="t16" style="left:86.80px;top:210.58px;font-size:10.3px;line-height:10.3px;font-weight:bold;color:#2f3c48;transform:scaleX(0.9698);">Name</span><span class="t" id="t17" style="left:173.10px;top:210.58px;font-size:10.3px;line-height:10.3px;font-weight:bold;color:#2f3c48;transform:scaleX(0.9715);">Email</span><span class="t" id="t18" style="left:292.60px;top:210.58px;font-size:10.3px;line-height:10.3px;font-weight:bold;color:#2f3c48;transform:scaleX(0.9373);">Self Assessment</span><span class="t" id="t19" style="left:421.10px;top:210.58px;font-size:10.3px;line-height:10.3px;font-weight:bold;color:#2f3c48;transform:scaleX(0.9145);">RA Assessment</span><span class="t" id="t20" style="left:538.80px;top:210.58px;font-size:10.3px;line-height:10.3px;font-weight:bold;color:#2f3c48;transform:scaleX(0.9645);">Self Review</span><span class="t" id="t21" style="left:640.90px;top:210.58px;font-size:10.3px;line-height:10.3px;font-weight:bold;color:#2f3c48;transform:scaleX(0.9610);">RA Finalization</span><span class="t" id="t22" style="left:763.30px;top:210.58px;font-size:10.3px;line-height:10.3px;font-weight:bold;color:#2f3c48;transform:scaleX(0.9806);">Student Details</span><span class="t" id="t23" style="left:891.40px;top:210.58px;font-size:10.3px;line-height:10.3px;font-weight:bold;color:#2f3c48;transform:scaleX(0.9434);">Assessment Details</span><span class="t" id="t24" style="left:1028.00px;top:210.58px;font-size:10.3px;line-height:10.3px;font-weight:bold;color:#2f3c48;transform:scaleX(1.0184);">Print</span><span class="t" id="t25" style="left:86.80px;top:239.26px;font-size:10.2px;line-height:10.2px;font-weight:normal;color:#464646;">Amina</span><span class="t" id="t26" style="left:172.80px;top:239.26px;font-size:10.2px;line-height:10.2px;font-weight:normal;color:#464646;transform:scaleX(0.9972);">info@fego.in</span><span class="t" id="t27" style="left:86.80px;top:267.68px;font-size:10.2px;line-height:10.2px;font-weight:normal;color:#464646;">Ariel</span><span class="t" id="t28" style="left:172.80px;top:267.68px;font-size:10.2px;line-height:10.2px;font-weight:normal;color:#464646;transform:scaleX(0.9972);">info@fego.in</span><span class="t" id="t29" style="left:86.80px;top:296.10px;font-size:10.2px;line-height:10.2px;font-weight:normal;color:#464646;">Brady</span><span class="t" id="t30" style="left:172.80px;top:296.10px;font-size:10.2px;line-height:10.2px;font-weight:normal;color:#464646;transform:scaleX(0.9972);">info@fego.in</span><span class="t" id="t31" style="left:86.80px;top:324.52px;font-size:10.2px;line-height:10.2px;font-weight:normal;color:#464646;">Brooklyn</span><span class="t" id="t32" style="left:172.80px;top:324.52px;font-size:10.2px;line-height:10.2px;font-weight:normal;color:#464646;transform:scaleX(0.9972);">info@fego.in</span><span class="t" id="t33" style="left:86.80px;top:352.94px;font-size:10.2px;line-height:10.2px;font-weight:normal;color:#464646;">Caroline</span><span class="t" id="t34" style="left:172.80px;top:352.94px;font-size:10.2px;line-height:10.2px;font-weight:normal;color:#464646;transform:scaleX(0.9972);">info@fego.in</span><span class="t" id="t35" style="left:86.80px;top:381.36px;font-size:10.2px;line-height:10.2px;font-weight:normal;color:#464646;">Charles</span><span class="t" id="t36" style="left:172.80px;top:381.36px;font-size:10.2px;line-height:10.2px;font-weight:normal;color:#464646;transform:scaleX(0.9972);">info@fego.in</span><span class="t" id="t37" style="left:86.80px;top:409.78px;font-size:10.2px;line-height:10.2px;font-weight:normal;color:#464646;">Daniel</span><span class="t" id="t38" style="left:172.80px;top:409.78px;font-size:10.2px;line-height:10.2px;font-weight:normal;color:#464646;transform:scaleX(0.9972);">info@fego.in</span><span class="t" id="t39" style="left:86.80px;top:438.20px;font-size:10.2px;line-height:10.2px;font-weight:normal;color:#464646;">David</span><span class="t" id="t40" style="left:172.80px;top:438.20px;font-size:10.2px;line-height:10.2px;font-weight:normal;color:#464646;transform:scaleX(0.9972);">info@fego.in</span><span class="t" id="t41" style="left:86.80px;top:466.62px;font-size:10.2px;line-height:10.2px;font-weight:normal;color:#464646;">Denise</span><span class="t" id="t42" style="left:172.80px;top:466.62px;font-size:10.2px;line-height:10.2px;font-weight:normal;color:#464646;transform:scaleX(0.9972);">info@fego.in</span><span class="t" id="t43" style="left:86.80px;top:495.04px;font-size:10.2px;line-height:10.2px;font-weight:normal;color:#464646;">Edwin</span><span class="t" id="t44" style="left:172.80px;top:495.04px;font-size:10.2px;line-height:10.2px;font-weight:normal;color:#464646;transform:scaleX(0.9972);">info@fego.in</span><span class="t" id="t45" style="left:86.80px;top:523.46px;font-size:10.2px;line-height:10.2px;font-weight:normal;color:#464646;">Ellie</span><span class="t" id="t46" style="left:172.80px;top:523.46px;font-size:10.2px;line-height:10.2px;font-weight:normal;color:#464646;transform:scaleX(0.9972);">info@fego.in</span><span class="t" id="t47" style="left:86.80px;top:551.88px;font-size:10.2px;line-height:10.2px;font-weight:normal;color:#464646;">Giselle</span><span class="t" id="t48" style="left:172.80px;top:551.88px;font-size:10.2px;line-height:10.2px;font-weight:normal;color:#464646;transform:scaleX(0.9972);">info@fego.in</span><span class="t" id="t49" style="left:86.80px;top:580.30px;font-size:10.2px;line-height:10.2px;font-weight:normal;color:#464646;">Hannah</span><span class="t" id="t50" style="left:172.80px;top:580.30px;font-size:10.2px;line-height:10.2px;font-weight:normal;color:#464646;transform:scaleX(0.9972);">info@fego.in</span><span class="t" id="t51" style="left:7.80px;top:615.29px;font-size:10.4px;line-height:10.4px;font-weight:normal;color:#666666;transform:scaleX(0.9499);">Copyright © 2015 Powered by Fego.</span><span class="t" id="t52" style="left:557.40px;top:615.29px;font-size:10.4px;line-height:10.4px;font-weight:normal;color:#666666;transform:scaleX(0.9581);">We recommend Google Chrome.</span><span class="t" id="t53" style="left:1019.80px;top:615.29px;font-size:10.4px;line-height:10.4px;font-weight:normal;color:#666666;transform:scaleX(0.9400);">Feedback</span><span class="t" id="t54" style="left:1097.20px;top:615.29px;font-size:10.4px;line-height:10.4px;font-weight:normal;color:#666666;transform:scaleX(0.9404);">Help</span>
</body></html>
